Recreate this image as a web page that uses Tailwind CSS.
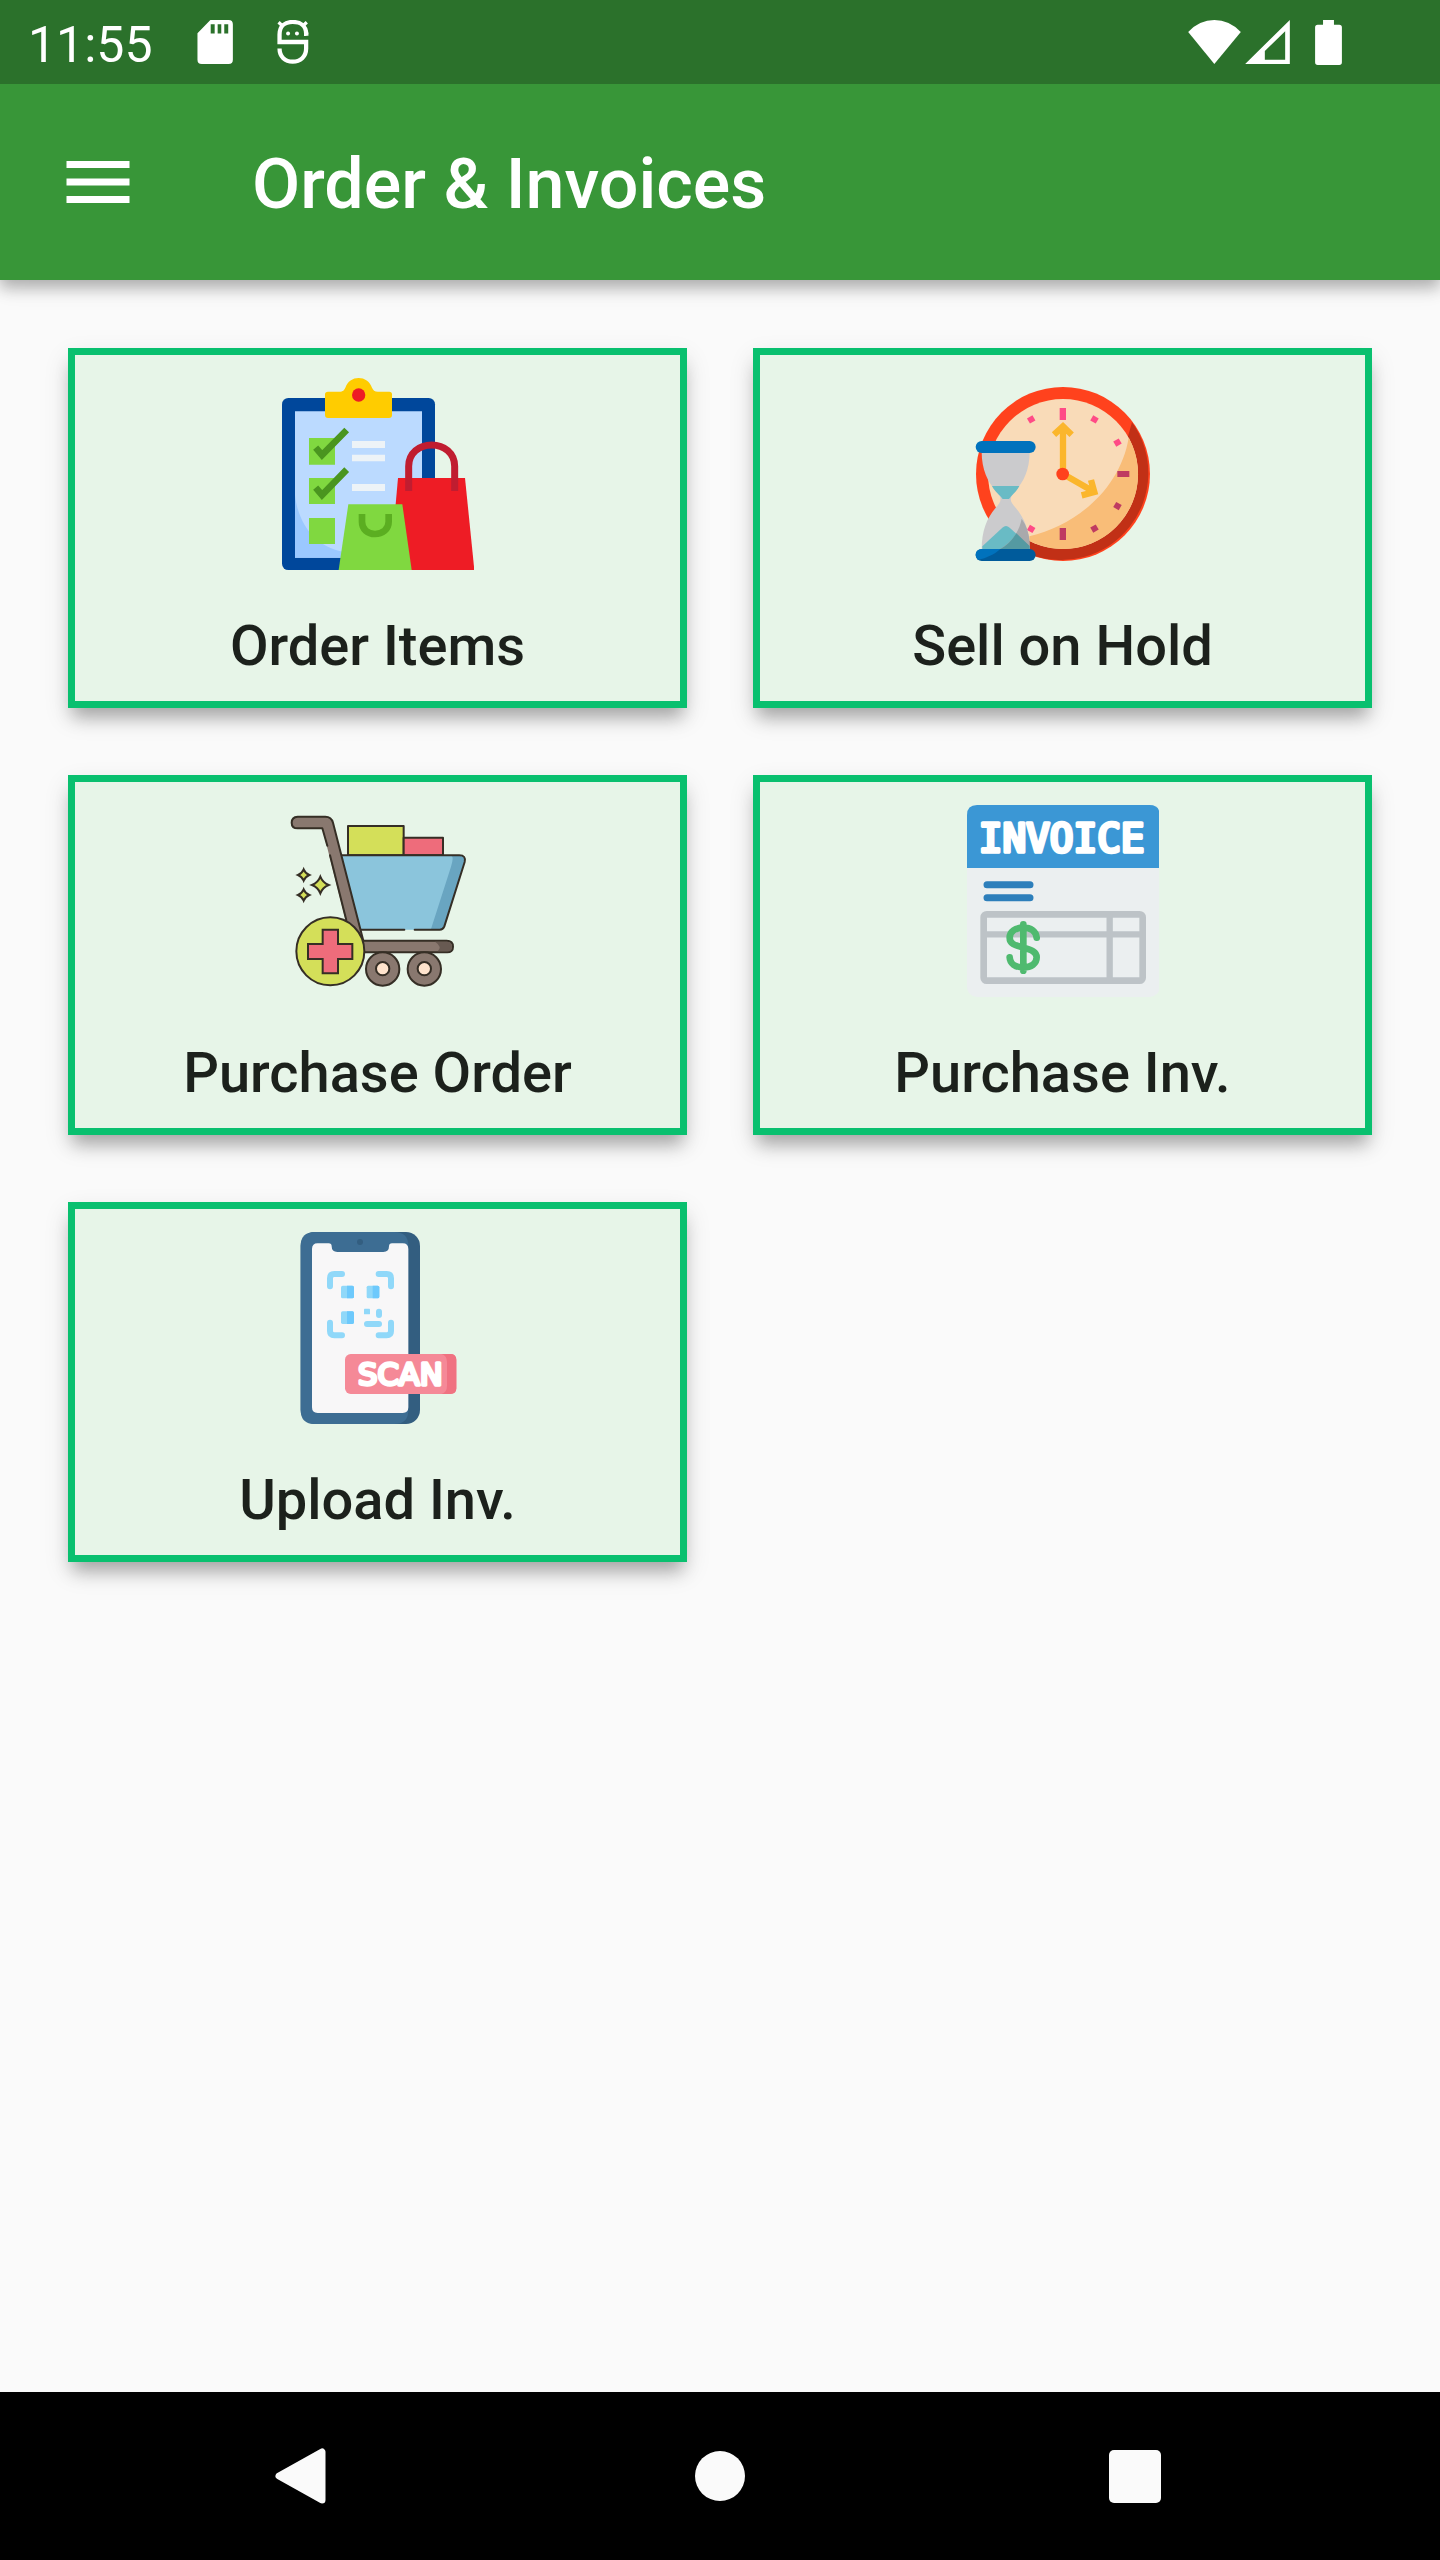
<!DOCTYPE html>
<html lang="en">
  <head>
    <meta charset="UTF-8" />
    <meta name="viewport" content="width=device-width, initial-scale=1.0" />
    <title>Order &amp; Invoices</title>
    <script src="https://cdn.jsdelivr.net/npm/@tailwindcss/browser@4"></script>
  </head>
  <body
    class="min-h-screen flex flex-col bg-[#fafafa] font-[Roboto,sans-serif] text-[#1c211c]"
  >
    <!-- status bar -->
    <div
      class="relative z-10 flex items-center justify-between h-[84px] pl-7 pr-[98px] bg-[#2b712b] text-white"
    >
      <div class="flex items-center">
        <span class="text-[50px] leading-[58px] mt-1.5">11:55</span>
        <svg class="w-9 h-11 ml-11" viewBox="592 60 108 133" fill="#fff">
          <path
            fill-rule="evenodd"
            d="M632 60H687Q700 60 700 73V180Q700 193 687 193H606Q593 193 593 180V100ZM633 73V101H645V73ZM654 73V101H665V73ZM674 73V101H686V73Z"
          />
        </svg>
        <svg
          class="w-8 h-11 ml-11"
          viewBox="830 60 96 134"
          fill="none"
          stroke="#fff"
          stroke-width="13"
        >
          <path d="M919 102H918C918 78 900 66 877 66S837 78 837 104V127H918V147C918 172 900 187 877 187S837 172 837 147" />
          <path d="M912 103H925M834 67L848 80M920 67L906 80" stroke-width="10" />
          <circle cx="863" cy="101" r="6" fill="#fff" stroke="none" />
          <circle cx="890" cy="101" r="6" fill="#fff" stroke="none" />
        </svg>
      </div>
      <div class="flex items-center">
        <svg class="w-[53px] h-11" viewBox="114 57 159 133" fill="#fff">
          <path d="M114 93Q148 57 193 57T273 93L193 190Z" />
        </svg>
        <svg class="w-[45px] h-11 ml-1" viewBox="286 59 134 132" fill="#fff">
          <path
            fill-rule="evenodd"
            d="M420 59V191H286ZM406 93L345 152V178H406Z"
          />
        </svg>
        <svg class="w-[27px] h-[45px] ml-[25px]" viewBox="495 58 81 136" fill="#fff">
          <path
            d="M519 58H552V72H568Q576 72 576 80V186Q576 194 568 194H503Q495 194 495 186V80Q495 72 503 72H519Z"
          />
        </svg>
      </div>
    </div>

    <header
      class="flex items-center gap-28 h-[196px] px-14 bg-[#389638] text-white shadow-[0_8px_14px_rgba(0,0,0,0.24),0_4px_24px_rgba(0,0,0,0.12)]"
    >
      <button aria-label="Open menu">
        <svg class="w-[84px] h-[84px]" viewBox="0 0 24 24" fill="#fff">
          <path d="M3 18h18v-2H3v2zm0-5h18v-2H3v2zm0-7v2h18V6H3z" />
        </svg>
      </button>
      <h1 class="pt-1 text-[70px] leading-[82px] font-medium">Order &amp; Invoices</h1>
    </header>

    <main class="flex-1 grid grid-cols-2 content-start gap-x-[66px] gap-y-[67px] p-[68px]">
      <a
        href="#order-items"
        class="flex flex-col items-center gap-11 p-[23px] border-7 border-[#09c06f] bg-[#e7f5e8] shadow-[0_14px_16px_-5px_rgba(0,0,0,0.26),0_10px_24px_rgba(0,0,0,0.12)]"
      >
        <svg class="w-48 h-48" viewBox="63 39 576 576">
          <rect x="63" y="99" width="459" height="516" rx="19" fill="#00479b" />
          <path d="M102 139H483V578H102Z" fill="#bbdaff" />
          <path d="M102 390C112 480 165 545 245 560V578H102Z" fill="#9bc8ff" />
          <path
            d="M201 80H235C246 80 250 75 253 68C260 49 275 39 293 39S326 49 333 68C336 75 341 80 351 80H385Q393 80 393 88V150Q393 159 384 159H201Q192 159 192 150V88Q192 80 201 80Z"
            fill="#fc0"
          />
          <circle cx="293" cy="90" r="20" fill="#ee1c25" />
          <path
            d="M144 219H222V299H144ZM144 339H222V417H144ZM144 459H222V537H144Z"
            fill="#80d840"
          />
          <path
            d="M164 248L183 270L257 195M164 368L183 390L257 314"
            fill="none"
            stroke="#4a951f"
            stroke-width="20"
          />
          <path
            d="M273 228H372V249H273ZM273 269H372V289H273ZM273 357H372V378H273Z"
            fill="#edf3f7"
          />
          <path d="M411 339H612L640 615H450L404 418Z" fill="#ee1c25" />
          <path
            d="M443 378V304C443 264 475 240 512 240S581 264 581 304V378"
            fill="none"
            stroke="#c01d30"
            stroke-width="21"
          />
          <path d="M262 418H424L452 615H233Z" fill="#80d840" />
          <path
            d="M303 447V470C303 493 320 507 342 507S383 493 383 470V447"
            fill="none"
            stroke="#5bae21"
            stroke-width="20"
          />
        </svg>
        <span class="text-[56px] leading-[64px] font-medium">Order Items</span>
      </a>

      <a
        href="#sell-on-hold"
        class="flex flex-col items-center gap-11 p-[23px] border-7 border-[#09c06f] bg-[#e7f5e8] shadow-[0_14px_16px_-5px_rgba(0,0,0,0.26),0_10px_24px_rgba(0,0,0,0.12)]"
      >
        <svg class="w-48 h-48" viewBox="50 39 576 576">
          <circle cx="338" cy="327" r="261" fill="#ff421d" />
          <path
            d="M545 172A261 261 0 0 1 235 566V480L520 260Z"
            fill="#c13016"
          />
          <circle cx="338" cy="327" r="225" fill="#f9dbb8" />
          <path
            d="M535 218A225 225 0 0 1 237 528V514C380 480 510 370 535 218Z"
            fill="#f9bd78"
          />
          <path d="M328 129H347V165H328Z" fill="#ff4b86" />
          <path
            d="M328 489H347V525H328ZM501 318H537V336H501Z"
            fill="#bf3b61"
          />
          <g fill="#ff4b86">
            <rect x="233" y="154" width="19" height="18" transform="rotate(-30 243 163)" />
            <rect x="423" y="154" width="19" height="18" transform="rotate(30 432 163)" />
            <rect x="492" y="224" width="19" height="18" transform="rotate(-30 501 233)" />
            <rect x="233" y="483" width="19" height="18" transform="rotate(30 243 492)" />
          </g>
          <g fill="#bf3b61">
            <rect x="492" y="414" width="19" height="18" transform="rotate(30 501 423)" />
            <rect x="423" y="482" width="19" height="18" transform="rotate(-30 432 491)" />
          </g>
          <path
            d="M338 327V188M311 209L338 184L364 209M338 327L428 379M422 345L432 381L394 391"
            fill="none"
            stroke="#fbb62c"
            stroke-width="19"
          />
          <circle cx="337" cy="327" r="19" fill="#ff421d" />
          <path
            d="M94 260H238C238 315 219 350 197 376C176 399 176 407 197 430C222 460 238 495 238 556H94C94 495 110 460 135 430C156 407 156 399 135 376C113 350 94 315 94 260Z"
            fill="#cbcbcd"
          />
          <path
            d="M125 363H207C198 382 184 389 176 402H157C149 389 134 382 125 363Z"
            fill="#69bbc5"
          />
          <path d="M96 556V544L156 488Q167 478 178 488L238 543V556Z" fill="#69bbc5" />
          <path
            d="M214 461C206 502 184 533 143 556H238V530Q235 490 214 461Z"
            fill="#a9a9ac"
          />
          <path d="M198 505L238 543V556H143C170 543 185 526 198 505Z" fill="#559aa2" />
          <rect x="76" y="228" width="180" height="36" rx="18" fill="#0072bd" />
          <rect x="76" y="552" width="180" height="36" rx="18" fill="#005b9b" />
          <path
            d="M94 552H150C131 570 108 578 84 585C72 578 72 552 94 552Z"
            fill="#0072bd"
          />
        </svg>
        <span class="text-[56px] leading-[64px] font-medium">Sell on Hold</span>
      </a>

      <a
        href="#purchase-order"
        class="flex flex-col items-center gap-11 p-[23px] border-7 border-[#09c06f] bg-[#e7f5e8] shadow-[0_14px_16px_-5px_rgba(0,0,0,0.26),0_10px_24px_rgba(0,0,0,0.12)]"
      >
        <svg
          class="w-48 h-48"
          viewBox="33 30 576 576"
          stroke="#352e25"
          stroke-width="6"
          stroke-linejoin="round"
          stroke-linecap="round"
        >
          <path d="M231 93H398V181H231Z" fill="#d4df59" />
          <path d="M398 128H516V181H398Z" fill="#ee6c7b" />
          <path
            d="M212 181H565Q586 181 581 201L520 394Q516 404 506 404H266Z"
            fill="#8bc5dc"
            stroke="none"
          />
          <path
            d="M542 183H565Q584 183 579 201L519 394Q516 402 506 402H480L540 215Q549 187 542 183Z"
            fill="#69a5c1"
            stroke="none"
          />
          <path
            d="M212 181H565Q586 181 581 201L520 394Q516 404 506 404H431M400 404H266"
            fill="none"
          />
          <path
            d="M270 437H527Q546 437 546 455T527 472H270Z"
            fill="#89786f"
          />
          <path
            d="M492 440H527Q543 440 543 455T527 469H500Q515 455 492 440Z"
            fill="#685a52"
            stroke="none"
          />
          <path
            d="M80 65H163Q181 65 186 83L277 437L226 385L154 100H80Q62 100 62 83T80 65Z"
            fill="#89786f"
            stroke="none"
          />
          <path
            d="M169 152L154 100H80Q62 100 62 83T80 65H163Q181 65 186 83L277 437M177 181L226 376"
            fill="none"
          />
          <g fill="#89786f">
            <circle cx="335" cy="522" r="50" />
            <circle cx="460" cy="522" r="50" />
          </g>
          <g fill="#ffe4cd">
            <circle cx="335" cy="521" r="20" />
            <circle cx="460" cy="521" r="20" />
          </g>
          <circle cx="178" cy="469" r="102" fill="#d4df59" />
          <path
            d="M155 404H201V447H244V492H201V535H155V492H111V447H155Z"
            fill="#ee6c7b"
            stroke-linejoin="miter"
          />
          <g fill="#d4df59" stroke-linejoin="miter">
            <path d="M98 223Q103 235 115 240Q103 245 98 257Q93 245 81 240Q93 235 98 223Z" />
            <path d="M98 283Q103 295 115 300Q103 305 98 317Q93 305 81 300Q93 295 98 283Z" />
            <path d="M148 245Q155 263 173 270Q155 277 148 295Q141 277 123 270Q141 263 148 245Z" />
          </g>
        </svg>
        <span class="text-[56px] leading-[64px] font-medium">Purchase Order</span>
      </a>

      <a
        href="#purchase-invoice"
        class="flex flex-col items-center gap-11 p-[23px] border-7 border-[#09c06f] bg-[#e7f5e8] shadow-[0_14px_16px_-5px_rgba(0,0,0,0.26),0_10px_24px_rgba(0,0,0,0.12)]"
      >
        <svg class="w-48 h-48" viewBox="49 45 576 576">
          <rect x="49" y="45" width="578" height="576" rx="30" fill="#ebeff0" />
          <path d="M49 234V75Q49 45 79 45H597Q627 45 627 75V234Z" fill="#3b97d5" />
          <text
            x="333"
            y="187"
            text-anchor="middle"
            class="font-['DejaVu_Sans_Mono',monospace] text-[118px]"
            fill="#fff"
            stroke="#fff"
            stroke-width="11"
            stroke-linejoin="round"
          >
            INVOICE
          </text>
          <path
            d="M109 284H238M109 323H238"
            stroke="#2d7fbb"
            stroke-width="21"
            stroke-linecap="round"
          />
          <g fill="none" stroke="#bdc3c7">
            <rect x="99" y="373" width="477" height="199" rx="9" stroke-width="20" />
            <path d="M99 433H576M477 373V572" stroke-width="19" />
          </g>
          <path
            d="M218 403V542M258 443C256 424 240 413 218 413C194 413 177 425 177 443C177 462 194 466 218 473C243 480 258 486 258 502C258 521 242 532 218 532C194 532 178 521 177 502"
            fill="none"
            stroke="#4fba6f"
            stroke-width="20"
            stroke-linecap="round"
          />
        </svg>
        <span class="text-[56px] leading-[64px] font-medium">Purchase Inv.</span>
      </a>

      <a
        href="#upload-invoice"
        class="flex flex-col items-center gap-11 p-[23px] border-7 border-[#09c06f] bg-[#e7f5e8] shadow-[0_14px_16px_-5px_rgba(0,0,0,0.26),0_10px_24px_rgba(0,0,0,0.12)]"
      >
        <svg class="w-48 h-48" viewBox="3 51 576 576">
          <rect x="59" y="51" width="358" height="576" rx="42" fill="#335e80" />
          <path
            d="M101 51H340Q382 51 382 93V585Q382 627 340 627H101Q59 627 59 585V93Q59 51 101 51Z"
            fill="#3d6d93"
          />
          <path
            d="M110 85H143Q152 85 152 94Q152 111 169 111H307Q324 111 324 94Q324 85 333 85H365Q382 85 382 102V577Q382 594 365 594H110Q93 594 93 577V102Q93 85 110 85Z"
            fill="#f8f7f8"
          />
          <circle cx="237" cy="81" r="9" fill="#335e80" />
          <path
            d="M147 214V190Q147 177 160 177H183M293 177H317Q330 177 330 190V214M147 323V348Q147 361 160 361H183M293 361H317Q330 361 330 348V323M258 327H294M294 290V300"
            fill="none"
            stroke="#90d8f9"
            stroke-width="18"
            stroke-linecap="round"
          />
          <g fill="#90d8f9">
            <rect x="180" y="212" width="39" height="38" rx="5" />
            <rect x="257" y="212" width="38" height="38" rx="5" />
            <rect x="180" y="289" width="39" height="38" rx="5" />
            <rect x="249" y="281" width="18" height="17" rx="2" />
          </g>
          <path
            d="M198 212H214Q219 212 219 217V245Q219 250 214 250H198ZM275 212H290Q295 212 295 217V245Q295 250 290 250H275ZM198 289H214Q219 289 219 294V322Q219 327 214 327H198Z"
            fill="#6dc9fc"
          />
          <rect x="192" y="417" width="334" height="120" rx="17" fill="#f58997" />
          <path
            d="M481 417H509Q526 417 526 434V520Q526 537 509 537H481Q498 533 498 512V442Q498 421 481 417Z"
            fill="#f07281"
          />
          <text
            x="358"
            y="510"
            text-anchor="middle"
            class="font-['DejaVu_Sans',sans-serif] text-[92px] font-normal"
            fill="#fff"
            stroke="#fff"
            stroke-width="10"
            stroke-linejoin="round"
          >
            SCAN
          </text>
        </svg>
        <span class="text-[56px] leading-[64px] font-medium">Upload Inv.</span>
      </a>
    </main>

    <!-- system navigation -->
    <nav class="flex items-center justify-center gap-[303px] h-[168px] bg-black">
      <button aria-label="Back">
        <svg class="w-28 h-28" viewBox="0 0 112 112">
          <path
            d="M30 56L73 32V80Z"
            fill="#fafafa"
            stroke="#fafafa"
            stroke-width="7"
            stroke-linejoin="round"
          />
        </svg>
      </button>
      <button aria-label="Home">
        <svg class="w-28 h-28" viewBox="0 0 112 112">
          <circle cx="56" cy="56" r="25" fill="#fafafa" />
        </svg>
      </button>
      <button aria-label="Recent apps">
        <svg class="w-28 h-28" viewBox="0 0 112 112">
          <rect x="30" y="30" width="52" height="53" rx="5" fill="#fafafa" />
        </svg>
      </button>
    </nav>
  </body>
</html>
